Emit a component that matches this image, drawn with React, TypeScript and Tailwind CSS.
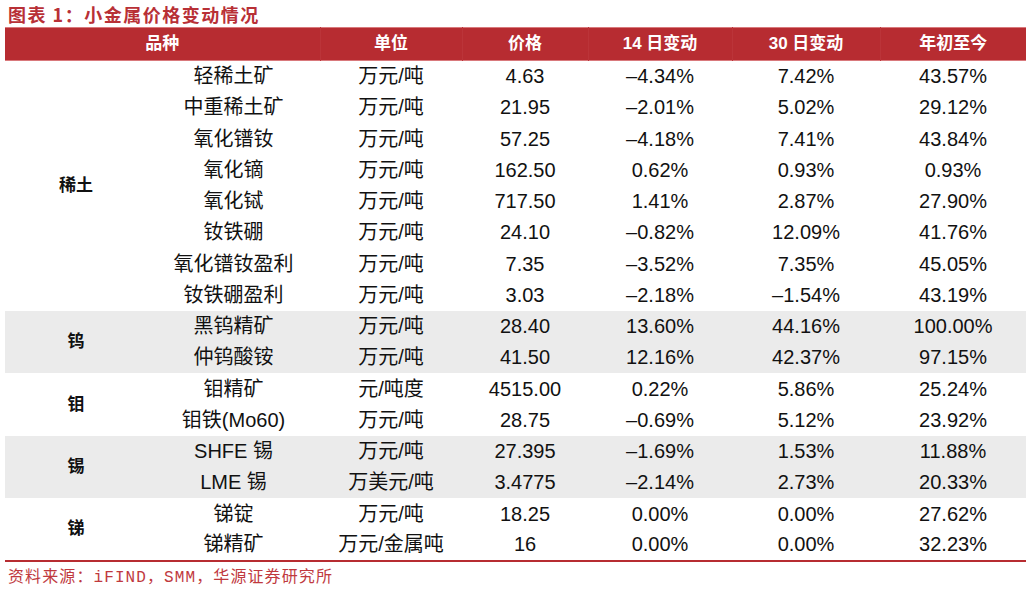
const groups = [
  {
    name: "稀土",
    gray: false,
    rows: [
      ["轻稀土矿", "万元/吨", "4.63", "–4.34%", "7.42%", "43.57%"],
      ["中重稀土矿", "万元/吨", "21.95", "–2.01%", "5.02%", "29.12%"],
      ["氧化镨钕", "万元/吨", "57.25", "–4.18%", "7.41%", "43.84%"],
      ["氧化镝", "万元/吨", "162.50", "0.62%", "0.93%", "0.93%"],
      ["氧化铽", "万元/吨", "717.50", "1.41%", "2.87%", "27.90%"],
      ["钕铁硼", "万元/吨", "24.10", "–0.82%", "12.09%", "41.76%"],
      ["氧化镨钕盈利", "万元/吨", "7.35", "–3.52%", "7.35%", "45.05%"],
      ["钕铁硼盈利", "万元/吨", "3.03", "–2.18%", "–1.54%", "43.19%"],
    ],
  },
  {
    name: "钨",
    gray: true,
    rows: [
      ["黑钨精矿", "万元/吨", "28.40", "13.60%", "44.16%", "100.00%"],
      ["仲钨酸铵", "万元/吨", "41.50", "12.16%", "42.37%", "97.15%"],
    ],
  },
  {
    name: "钼",
    gray: false,
    rows: [
      ["钼精矿", "元/吨度", "4515.00", "0.22%", "5.86%", "25.24%"],
      ["钼铁(Mo60)", "万元/吨", "28.75", "–0.69%", "5.12%", "23.92%"],
    ],
  },
  {
    name: "锡",
    gray: true,
    rows: [
      ["SHFE 锡", "万元/吨", "27.395", "–1.69%", "1.53%", "11.88%"],
      ["LME 锡", "万美元/吨", "3.4775", "–2.14%", "2.73%", "20.33%"],
    ],
  },
  {
    name: "锑",
    gray: false,
    rows: [
      ["锑锭", "万元/吨", "18.25", "0.00%", "0.00%", "27.62%"],
      ["锑精矿", "万元/金属吨", "16", "0.00%", "0.00%", "32.23%"],
    ],
  },
];

const font = { fontFamily: '"Liberation Sans", "Noto Sans CJK SC", sans-serif' };

export default function App() {
  return (
    <div className="w-[1031px] h-[594px] bg-white px-[5px] pt-[3px]" style={font}>
      <div
        className="pl-[3px] h-[24px] text-[18px] leading-[22px] font-bold tracking-[1.5px] text-[#b83036]"
        style={{ fontFamily: '"Noto Sans CJK SC", "Liberation Sans", sans-serif' }}
      >
        图表 1：小金属价格变动情况
      </div>
      <table className="w-[1021px] table-fixed border-collapse text-[#111]">
        <colgroup>
          <col className="w-[142px]" />
          <col className="w-[173px]" />
          <col className="w-[142px]" />
          <col className="w-[126px]" />
          <col className="w-[144px]" />
          <col className="w-[148px]" />
          <col className="w-[146px]" />
        </colgroup>
        <thead>
          <tr className="h-[33px] bg-[#b72c31] text-white text-[17px] font-bold border-t border-t-[#d9797c] border-b border-b-[#d9797c]">
            <th colSpan={2} className="font-bold border-r border-r-[#bb3439]">品种</th>
            <th className="font-bold border-r border-r-[#bb3439]">单位</th>
            <th className="font-bold border-r border-r-[#bb3439]">价格</th>
            <th className="font-bold border-r border-r-[#bb3439]">14 日变动</th>
            <th className="font-bold border-r border-r-[#bb3439]">30 日变动</th>
            <th className="font-bold">年初至今</th>
          </tr>
        </thead>
        <tbody className="text-[20px]">
          {groups.map((g, gi) =>
            g.rows.map((r, ri) => (
              <tr
                key={`${gi}-${ri}`}
                className={`h-[31.25px] ${g.gray ? "bg-[#ebebeb]" : "bg-white"} ${
                  gi === groups.length - 1 && ri === g.rows.length - 1 ? "border-b-2 border-b-[#b72c31]" : ""
                }`}
              >
                {ri === 0 && (
                  <td rowSpan={g.rows.length} className="text-center text-[17px] font-bold align-middle">
                    {g.name}
                  </td>
                )}
                {r.map((c, ci) => (
                  <td key={ci} className="text-center leading-[24px] p-0">
                    {c}
                  </td>
                ))}
              </tr>
            ))
          )}
        </tbody>
      </table>
      <div
        className="pl-[3px] mt-[6px] text-[16px] leading-[20px] tracking-[1.1px] text-[#c0393e]"
        style={{ fontFamily: '"Liberation Mono", "Noto Sans CJK SC", monospace' }}
      >
        资料来源：iFIND，SMM，华源证券研究所
      </div>
    </div>
  );
}
